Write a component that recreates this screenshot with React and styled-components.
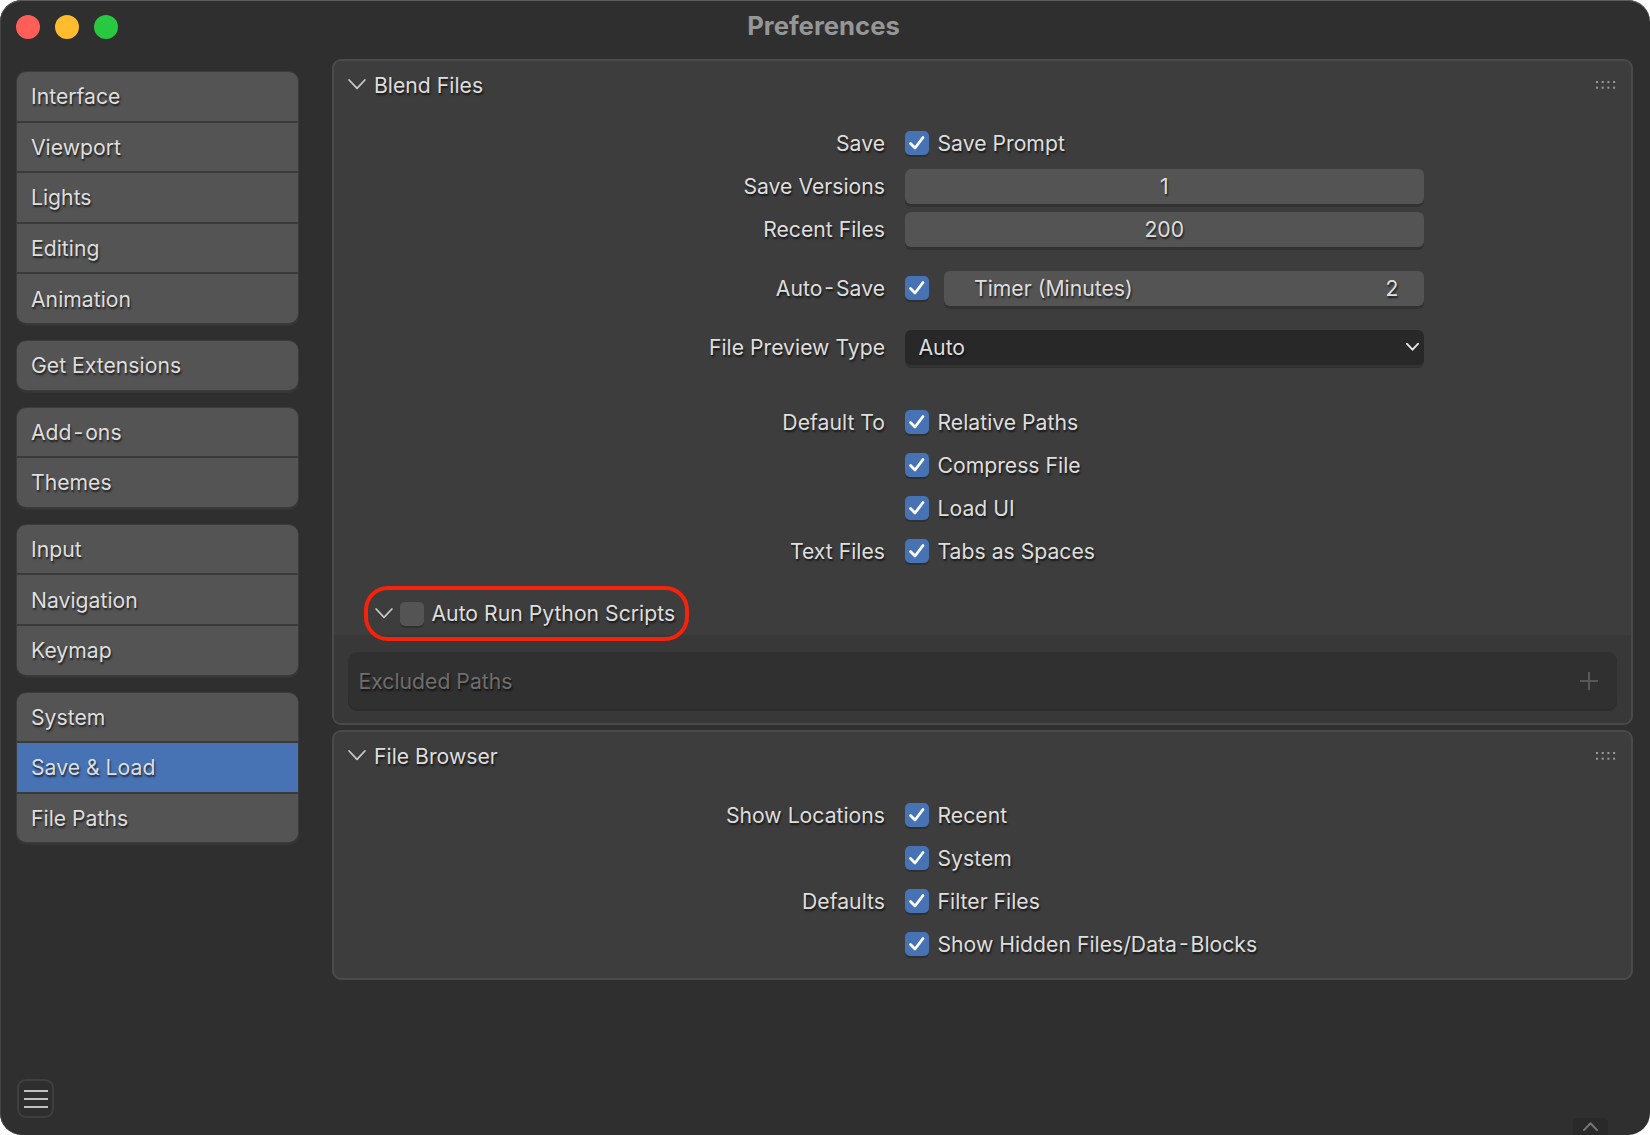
import styled, { createGlobalStyle } from 'styled-components';

const GlobalStyle = createGlobalStyle`
	html, body {
		margin: 0;
		padding: 0;
		background: #fff;
	}
	#root {
		width: 1650px;
		height: 1135px;
	}
`;

const Window = styled.div`
	position: relative;
	width: 1650px;
	height: 1135px;
	box-sizing: border-box;
	display: flex;
	flex-direction: column;
	overflow: hidden;
	border-radius: 22px;
	background: #2f2f2f;
	box-shadow: inset 0 1px 0 #5c5c5c, inset 1px 0 0 #444;
	font-family: Inter, 'Liberation Sans', sans-serif;
	font-size: 21.2px;
	color: #dedede;
	text-shadow: 1px 2px 2px rgba(0, 0, 0, 0.65);
`;

const TitleBar = styled.header`
	position: relative;
	flex: none;
	height: 59px;
	padding: 15px 0 0 15.5px;
	display: flex;
	align-items: flex-start;
	gap: 15.3px;
	box-sizing: border-box;
`;

const Light = styled.span`
	width: 24px;
	height: 24px;
	border-radius: 50%;
	background: ${(p) => p.$color};
`;

const Title = styled.h1`
	position: absolute;
	top: 10px;
	left: 0;
	right: 0;
	margin: 0;
	padding-right: 3px;
	text-align: center;
	font-size: 25.7px;
	line-height: 32px;
	font-weight: 700;
	color: #969696;
	text-shadow: none;
`;

const Main = styled.div`
	flex: 1;
	display: flex;
	padding: 0 17px 17px 17px;
	gap: 33.5px;
	min-height: 0;
`;

const Sidebar = styled.nav`
	flex: none;
	width: 281px;
	padding-top: 13px;
	display: flex;
	flex-direction: column;
	gap: 18px;
`;

const NavGroup = styled.div`
	display: flex;
	flex-direction: column;
	border-radius: 9px;
	overflow: hidden;
	background: #3a3a3a;
	box-shadow: 0 0 0 1px #3b3b3b, 0 2px 0 1px #353535;
`;

const NavItem = styled.div`
	height: 48.6px;
	display: flex;
	align-items: center;
	padding-left: 14px;
	background: ${(p) => (p.$active ? '#4772b3' : '#545454')};
	& + & {
		margin-top: 2px;
	}
`;

const MenuButton = styled.button`
	margin-top: auto;
	width: 37px;
	height: 39px;
	padding: 0;
	box-sizing: border-box;
	display: flex;
	flex-direction: column;
	align-items: center;
	justify-content: center;
	gap: 6px;
	border-radius: 9px;
	border: 2px solid #3f3f3f;
	background: #2e2e2e;
	span {
		width: 24px;
		height: 2px;
		background: #c0c0c0;
	}
`;

const Content = styled.main`
	flex: 1;
	display: flex;
	flex-direction: column;
	gap: 5px;
	min-width: 0;
`;

const Panel = styled.section`
	border: 2px solid #4a4a4a;
	border-radius: 9px;
	background: #3d3d3d;
	overflow: hidden;
`;

const PanelHeader = styled.div`
	height: 47px;
	padding-bottom: 1px;
	display: flex;
	align-items: center;
	padding-left: 14px;
	padding-right: 15.5px;
	gap: 8.5px;
`;

const PanelTitle = styled.span`
	flex: 1;
`;

const Form = styled.div`
	display: flex;
	flex-direction: column;
	gap: 8px;
	padding-top: ${(p) => p.$top}px;
	padding-bottom: ${(p) => p.$bottom || 0}px;
`;

const Row = styled.div`
	display: grid;
	grid-template-columns: 551.5px 518.5px;
	column-gap: 20px;
	align-items: center;
	height: 35px;
	margin-top: ${(p) => p.$space || 0}px;
`;

const Label = styled.div`
	text-align: right;
`;

const Inline = styled.div`
	display: flex;
	align-items: center;
	gap: ${(p) => p.$gap || 8.5}px;
`;

const Box = styled.span`
	flex: none;
	width: 24px;
	height: 24px;
	display: flex;
	align-items: center;
	justify-content: center;
	margin-left: ${(p) => p.$left || 0}px;
	border-radius: 5px;
	background: ${(p) => (p.$on ? '#4772b3' : '#545454')};
	box-shadow: 0 2px 0 #303030;
`;

const Field = styled.div`
	flex: 1;
	height: 35px;
	display: flex;
	align-items: center;
	justify-content: ${(p) => p.$justify || 'center'};
	box-sizing: border-box;
	padding: ${(p) => p.$pad || '0'};
	border-radius: 6px;
	background: #545454;
	box-shadow: 0 3px 0 #323232;
`;

const Select = styled(Field)`
	background: #282828;
`;

const SubSection = styled.div`
	margin-top: 18px;
`;

const Highlight = styled.div`
	position: relative;
	z-index: 1;
	display: inline-flex;
	align-items: center;
	height: 55px;
	box-sizing: border-box;
	margin: 0 0 -6px 30px;
	padding: 0 10px 0 7px;
	border: 4px solid #f5230b;
	border-radius: 24px;
	vertical-align: top;
`;

const SubHeaderText = styled.span`
	margin: 0 0 2px 8px;
`;

const SubBody = styled.div`
	padding: 17px 14px 14px;
	background: #383838;
`;

const PathList = styled.div`
	height: 57px;
	display: flex;
	align-items: center;
	justify-content: space-between;
	padding: 0 19px 0 11px;
	border-radius: 9px;
	background: #303030;
	box-shadow: 0 2px 0 #2c2c2c;
	color: #6e6e6e;
`;

const BottomTab = styled.div`
	position: absolute;
	left: 1573px;
	bottom: 0;
	width: 35px;
	height: 17px;
	display: flex;
	align-items: center;
	justify-content: center;
	border-radius: 5px 5px 0 0;
	background: #292929;
`;

const Chevron = ({ size = 18, color = '#c8c8c8', width = 1.8, up }) => (
	<svg width={size} height={size * 0.6} viewBox="0 0 18 11" fill="none">
		<path
			d={up ? 'M1 10 L9 1.5 L17 10' : 'M1 1 L9 9.5 L17 1'}
			stroke={color}
			strokeWidth={width}
			strokeLinecap="round"
			strokeLinejoin="round"
		/>
	</svg>
);

const Check = () => (
	<svg width="18" height="18" viewBox="0 0 18 18" fill="none">
		<path d="M2.5 9.5 L7 14 L15 3.5" stroke="#fff" strokeWidth="2.8" strokeLinecap="round" strokeLinejoin="round" />
	</svg>
);

const Grip = () => (
	<svg width="20" height="8" viewBox="0 0 20 8" fill="#9a9a9a">
		{[0, 5.7, 11.4, 17.1].map((x) => (
			<g key={x}>
				<rect x={x} y="0" width="2" height="2" />
				<rect x={x} y="5.7" width="2" height="2" />
			</g>
		))}
	</svg>
);

const Plus = () => (
	<svg width="18" height="18" viewBox="0 0 18 18" fill="none">
		<path d="M9 0 V18 M0 9 H18" stroke="#585858" strokeWidth="2" />
	</svg>
);

// the hyphen sits wider in the reference font, hair spaces open it up
const hyphen = '\u200a-\u200a';

const navGroups = [
	['Interface', 'Viewport', 'Lights', 'Editing', 'Animation'],
	['Get Extensions'],
	[`Add${hyphen}ons`, 'Themes'],
	['Input', 'Navigation', 'Keymap'],
	['System', 'Save & Load', 'File Paths'],
];

const CheckRow = ({ label, text, space }) => (
	<Row $space={space}>
		<Label>{label}</Label>
		<Inline>
			<Box $on>
				<Check />
			</Box>
			<span>{text}</span>
		</Inline>
	</Row>
);

const App = () => {
	return (
		<Window>
			<GlobalStyle />
			<TitleBar>
				<Light $color="#ff5f57" />
				<Light $color="#febc2e" />
				<Light $color="#28c840" />
				<Title>Preferences</Title>
			</TitleBar>
			<Main>
				<Sidebar>
					{navGroups.map((group) => (
						<NavGroup key={group[0]}>
							{group.map((item) => (
								<NavItem key={item} $active={item === 'Save & Load'}>
									{item}
								</NavItem>
							))}
						</NavGroup>
					))}
					<MenuButton aria-label="Menu">
						<span />
						<span />
						<span />
					</MenuButton>
				</Sidebar>
				<Content>
					<Panel>
						<PanelHeader>
							<Chevron />
							<PanelTitle>Blend Files</PanelTitle>
							<Grip />
						</PanelHeader>
						<Form $top={16.5}>
							<CheckRow label="Save" text="Save Prompt" />
							<Row>
								<Label>Save Versions</Label>
								<Field>1</Field>
							</Row>
							<Row>
								<Label>Recent Files</Label>
								<Field>200</Field>
							</Row>
							<Row $space={16}>
								<Label>{`Auto${hyphen}Save`}</Label>
								<Inline $gap={15}>
									<Box $on>
										<Check />
									</Box>
									<Field $justify="space-between" $pad="0 25px 0 30px">
										<span>Timer (Minutes)</span>
										<span>2</span>
									</Field>
								</Inline>
							</Row>
							<Row $space={16}>
								<Label>File Preview Type</Label>
								<Select $justify="space-between" $pad="0 5px 0 13.5px">
									<span>Auto</span>
									<Chevron size={13} color="#e8e8e8" width={2.6} />
								</Select>
							</Row>
							<CheckRow label="Default To" text="Relative Paths" space={31.5} />
							<CheckRow label="" text="Compress File" />
							<CheckRow label="" text="Load UI" />
							<CheckRow label="Text Files" text="Tabs as Spaces" />
						</Form>
						<SubSection>
							<Highlight>
								<Chevron />
								<Box $left={7} />
								<SubHeaderText>Auto Run Python Scripts</SubHeaderText>
							</Highlight>
							<SubBody>
								<PathList>
									<span>Excluded Paths</span>
									<Plus />
								</PathList>
							</SubBody>
						</SubSection>
					</Panel>
					<Panel>
						<PanelHeader>
							<Chevron />
							<PanelTitle>File Browser</PanelTitle>
							<Grip />
						</PanelHeader>
						<Form $top={17} $bottom={17}>
							<CheckRow label="Show Locations" text="Recent" />
							<CheckRow label="" text="System" />
							<CheckRow label="Defaults" text="Filter Files" />
							<CheckRow label="" text={`Show Hidden Files/Data${hyphen}Blocks`} />
						</Form>
					</Panel>
				</Content>
			</Main>
			<BottomTab>
				<Chevron size={15} color="#777" width={2.4} up />
			</BottomTab>
		</Window>
	);
};

export default App;
